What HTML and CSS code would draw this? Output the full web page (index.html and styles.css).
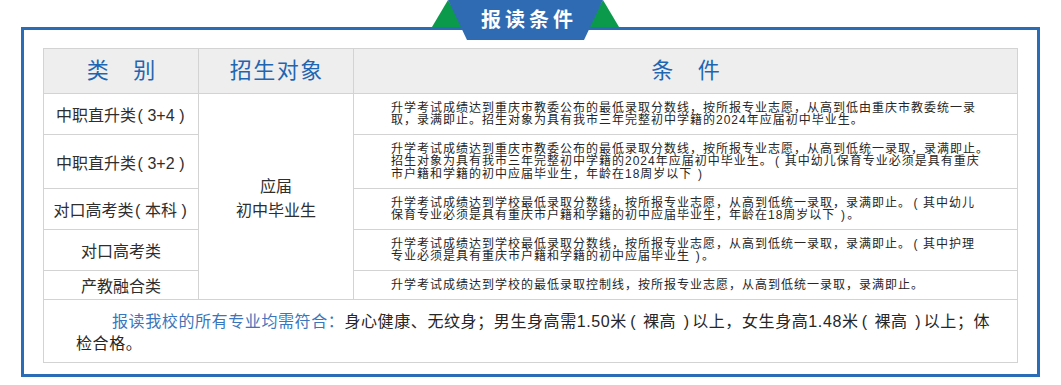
FILE: index.html
```html
<!DOCTYPE html>
<html lang="zh">
<head>
<meta charset="utf-8">
<link rel="stylesheet" href="styles.css">
</head>
<body>
<div class="section">
  <div class="tab">
    <svg class="tab-shape" width="192" height="41" viewBox="0 0 192 41">
      <polygon points="2,27 18,0 34,27" fill="#0b9a4b"/>
      <polygon points="157,27 173,0 189,27" fill="#0b9a4b"/>
      <polygon points="18,0 173,0 154,40 37,40" fill="#2f6bb3"/>
    </svg>
    <span class="tab-title">报读条件</span>
  </div>
  <div class="box">
    <table class="cond">
      <colgroup><col class="c1"><col class="c2"><col class="c3"></colgroup>
      <tr class="head">
        <th>类&nbsp;&nbsp;&nbsp;&nbsp;别</th>
        <th class="wide">招生对象</th>
        <th>条&nbsp;&nbsp;&nbsp;&nbsp;件</th>
      </tr>
      <tr class="r1">
        <td class="kind">中职直升类<span class="pl">(</span>3+4<span class="pr">)</span></td>
        <td class="target" rowspan="5">应届<br>初中毕业生</td>
        <td class="text">升学考试成绩达到重庆市教委公布的最低录取分数线，按所报专业志愿，从高到低由重庆市教委统一录<br>取，录满即止。招生对象为具有我市三年完整初中学籍的2024年应届初中毕业生。</td>
      </tr>
      <tr class="r2">
        <td class="kind">中职直升类<span class="pl">(</span>3+2<span class="pr">)</span></td>
        <td class="text">升学考试成绩达到重庆市教委公布的最低录取分数线，按所报专业志愿，从高到低统一录取，录满即止。<br>招生对象为具有我市三年完整初中学籍的2024年应届初中毕业生。<span class="pl">(</span>其中幼儿保育专业必须是具有重庆<br>市户籍和学籍的初中应届毕业生，年龄在18周岁以下<span class="pr">)</span></td>
      </tr>
      <tr class="r3">
        <td class="kind">对口高考类<span class="pl">(</span>本科<span class="pr">)</span></td>
        <td class="text">升学考试成绩达到学校最低录取分数线，按所报专业志愿，从高到低统一录取，录满即止。<span class="pl">(</span>其中幼儿<br>保育专业必须是具有重庆市户籍和学籍的初中应届毕业生，年龄在18周岁以下<span class="pr">)</span>。</td>
      </tr>
      <tr class="r4">
        <td class="kind">对口高考类</td>
        <td class="text">升学考试成绩达到学校最低录取分数线，按所报专业志愿，从高到低统一录取，录满即止。<span class="pl">(</span>其中护理<br>专业必须是具有重庆市户籍和学籍的初中应届毕业生<span class="pr">)</span>。</td>
      </tr>
      <tr class="r5">
        <td class="kind">产教融合类</td>
        <td class="text">升学考试成绩达到学校的最低录取控制线，按所报专业志愿，从高到低统一录取，录满即止。</td>
      </tr>
      <tr class="note-row">
        <td class="note" colspan="3"><span class="note-lead">报读我校的所有专业均需符合：</span>身心健康、无纹身；男生身高需1.50米<span class="pl">(</span>裸高<span class="pr">)</span>以上，女生身高1.48米<span class="pl">(</span>裸高<span class="pr">)</span>以上；体<br>检合格。</td>
      </tr>
    </table>
  </div>
</div>
</body>
</html>
```

FILE: styles.css
```css
html, body {
  margin: 0;
  padding: 0;
  background: #ffffff;
}

body {
  font-family: "Liberation Sans", "Noto Sans CJK SC", sans-serif;
  color: #333333;
}

.section {
  position: relative;
  width: 1061px;
  height: 385px;
  padding-top: 27px;
  box-sizing: border-box;
}

.tab {
  position: absolute;
  left: 430px;
  top: 0;
  width: 192px;
  height: 41px;
  z-index: 2;
}

.tab-shape {
  display: block;
}

.tab-title {
  position: absolute;
  left: 0;
  right: 0;
  top: 8px;
  text-align: center;
  color: #ffffff;
  font-weight: bold;
  font-size: 20px;
  line-height: 24px;
  letter-spacing: 4px;
  text-indent: 6px;
}

.box {
  margin-left: 21px;
  width: 1019px;
  height: 350px;
  box-sizing: border-box;
  border: 3px solid #2b6cb7;
  padding: 18px 20px 12px 19px;
}

.cond {
  border-collapse: collapse;
  width: 974px;
  table-layout: fixed;
}

.c1 { width: 155px; }
.c2 { width: 155px; }
.c3 { width: 664px; }

.cond th,
.cond td {
  border: 1px solid #d3d3d3;
  padding: 0;
  vertical-align: middle;
}

.head {
  height: 45px;
  background: #eeeeee;
}

.cond th {
  font-weight: normal;
  font-size: 22px;
  color: #1e66b2;
  text-align: center;
  line-height: 24px;
}

.cond th.wide {
  letter-spacing: 1.5px;
  text-indent: 1.5px;
}

.r1 { height: 41px; }
.r2 { height: 54px; }
.r3 { height: 41px; }
.r4 { height: 41px; }
.r5 { height: 29px; }
.note-row { height: 63px; }

.pl,
.pr {
  display: inline-block;
  width: 1em;
  box-sizing: border-box;
  text-indent: 0;
  letter-spacing: 0;
}

.pl {
  text-align: left;
  padding-left: 0.2em;
}

.pr {
  text-align: right;
  padding-right: 0.2em;
}

.kind .pl,
.kind .pr {
  width: 0.72em;
}

.kind .pl {
  padding-left: 0.1em;
}

.kind .pr {
  padding-right: 0.1em;
}

.cond td.kind {
  text-align: center;
  font-size: 16px;
  color: #2e2e2e;
  white-space: nowrap;
}

.cond td.target {
  text-align: center;
  font-size: 16px;
  line-height: 24px;
  color: #2e2e2e;
  padding-top: 4px;
}

.cond td.text {
  font-size: 12px;
  line-height: 12.5px;
  letter-spacing: 1px;
  color: #262626;
  padding: 0 10px 0 37px;
  white-space: nowrap;
  text-align: left;
}

.cond td.note {
  font-size: 16px;
  line-height: 22px;
  letter-spacing: 0.6px;
  color: #262626;
  padding: 3px 10px 0 32px;
  text-indent: 36px;
  white-space: nowrap;
}

.note-lead {
  color: #3a76bd;
}
```
